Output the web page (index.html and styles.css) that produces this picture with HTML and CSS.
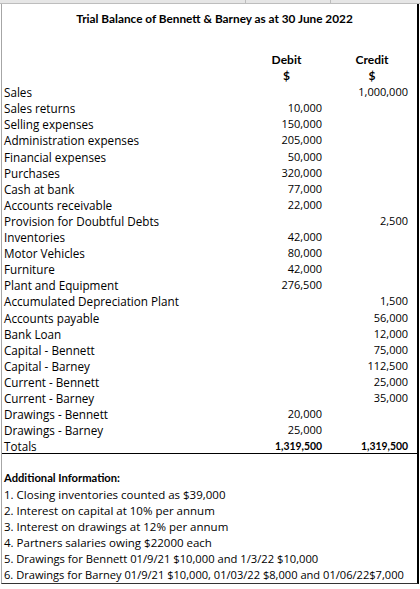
FILE: index.html
```html
<!DOCTYPE html>
<html>
<head>
<meta charset="utf-8">
<link rel="stylesheet" href="styles.css">
</head>
<body>
<div class="sheet">
  <div class="topstrip">
    <span class="tick t1"></span><span class="tick t2"></span>
  </div>
  <div class="frame">
    <div class="title">Trial Balance of Bennett &amp; Barney as at 30 June 2022</div>
    <div class="row head"><span class="lbl"></span><span class="num c">Debit</span><span class="num c">Credit</span></div>
    <div class="row head"><span class="lbl"></span><span class="num c">$</span><span class="num c">$</span></div>
    <div class="row"><span class="lbl">Sales</span><span class="num"></span><span class="num">1,000,000</span></div>
    <div class="row"><span class="lbl">Sales returns</span><span class="num">10,000</span><span class="num"></span></div>
    <div class="row"><span class="lbl">Selling expenses</span><span class="num">150,000</span><span class="num"></span></div>
    <div class="row"><span class="lbl">Administration expenses</span><span class="num">205,000</span><span class="num"></span></div>
    <div class="row"><span class="lbl">Financial expenses</span><span class="num">50,000</span><span class="num"></span></div>
    <div class="row"><span class="lbl">Purchases</span><span class="num">320,000</span><span class="num"></span></div>
    <div class="row"><span class="lbl">Cash at bank</span><span class="num">77,000</span><span class="num"></span></div>
    <div class="row"><span class="lbl">Accounts receivable</span><span class="num">22,000</span><span class="num"></span></div>
    <div class="row"><span class="lbl">Provision for Doubtful Debts</span><span class="num"></span><span class="num">2,500</span></div>
    <div class="row"><span class="lbl">Inventories</span><span class="num">42,000</span><span class="num"></span></div>
    <div class="row"><span class="lbl">Motor Vehicles</span><span class="num">80,000</span><span class="num"></span></div>
    <div class="row"><span class="lbl">Furniture</span><span class="num">42,000</span><span class="num"></span></div>
    <div class="row"><span class="lbl">Plant and Equipment</span><span class="num">276,500</span><span class="num"></span></div>
    <div class="row"><span class="lbl">Accumulated Depreciation Plant</span><span class="num"></span><span class="num">1,500</span></div>
    <div class="row"><span class="lbl">Accounts payable</span><span class="num"></span><span class="num">56,000</span></div>
    <div class="row"><span class="lbl">Bank Loan</span><span class="num"></span><span class="num">12,000</span></div>
    <div class="row"><span class="lbl">Capital - Bennett</span><span class="num"></span><span class="num">75,000</span></div>
    <div class="row"><span class="lbl">Capital - Barney</span><span class="num"></span><span class="num">112,500</span></div>
    <div class="row"><span class="lbl">Current - Bennett</span><span class="num"></span><span class="num">25,000</span></div>
    <div class="row"><span class="lbl">Current - Barney</span><span class="num"></span><span class="num">35,000</span></div>
    <div class="row"><span class="lbl">Drawings - Bennett</span><span class="num">20,000</span><span class="num"></span></div>
    <div class="row"><span class="lbl">Drawings - Barney</span><span class="num">25,000</span><span class="num"></span></div>
    <div class="row totals"><span class="lbl">Totals</span><span class="num b">1,319,500</span><span class="num b">1,319,500</span></div>
    <div class="row"><span class="lbl"></span></div>
    <div class="row"><span class="lbl b addl">Additional Information:</span></div>
    <div class="row info"><span class="lbl">1. Closing inventories counted as $39,000</span></div>
    <div class="row info"><span class="lbl">2. Interest on capital at 10% per annum</span></div>
    <div class="row info"><span class="lbl">3. Interest on drawings at 12% per annum</span></div>
    <div class="row info"><span class="lbl">4. Partners salaries owing $22000 each</span></div>
    <div class="row info l5"><span class="lbl">5. Drawings for Bennett 01/9/21 $10,000 and 1/3/22 $10,000</span></div>
    <div class="row info l6"><span class="lbl">6. Drawings for Barney 01/9/21 $10,000, 01/03/22 $8,000 and 01/06/22$7,000</span></div>
  </div>
</div>
</body>
</html>
```
FILE: styles.css
```css
* { box-sizing: border-box; }
html, body { margin: 0; padding: 0; background: #fff; }
body {
  font-family: "Open Sans", "Liberation Sans", sans-serif;
  font-size: 11px;
  color: #000;
  width: 420px;
  height: 589px;
  overflow: hidden;
}
.sheet { position: relative; width: 420px; }
.topstrip {
  position: relative;
  height: 4px;
  background: #e6e6e6;
  border-bottom: 1px solid #bdbdbd;
}
.tick { position: absolute; top: 0; width: 1px; height: 4px; background: #bdbdbd; }
.t1 { left: 245px; }
.t2 { left: 330px; }
.frame {
  width: 418px;
  margin-left: 1px;
  border-left: 1px solid #a6a6a6;
  border-right: 2px solid #000;
  border-bottom: 1px solid #333;
}
.title {
  height: 48px;
  padding-top: 8px;
  padding-left: 10px;
  text-align: center;
  font-family: "Lato", "Open Sans", sans-serif;
  font-weight: bold;
  font-size: 11.8px;
  line-height: 14px;
}
.row {
  display: grid;
  grid-template-columns: 242px 85px 86px;
  height: 16.1px;
  line-height: 16px;
  white-space: nowrap;
}
.lbl { padding-left: 2px; font-size: 11.7px; }
.head { font-family: "Lato", "Open Sans", sans-serif; font-weight: bold; font-size: 12px; }
.num { text-align: right; padding-right: 7px; }
.num.c { text-align: center; padding-right: 0; }
.b { font-family: "Lato", "Open Sans", sans-serif; font-weight: bold; font-size: 12px; }
.num.b { font-size: 10.4px; }
.addl { font-size: 11.2px; }
.totals { border-bottom: 1px solid #000; height: 16.1px; }
.info .lbl { font-size: 11.5px; }
.info.l5 .lbl { font-size: 11.2px; }
.info.l6 .lbl { font-size: 11.1px; }
```
